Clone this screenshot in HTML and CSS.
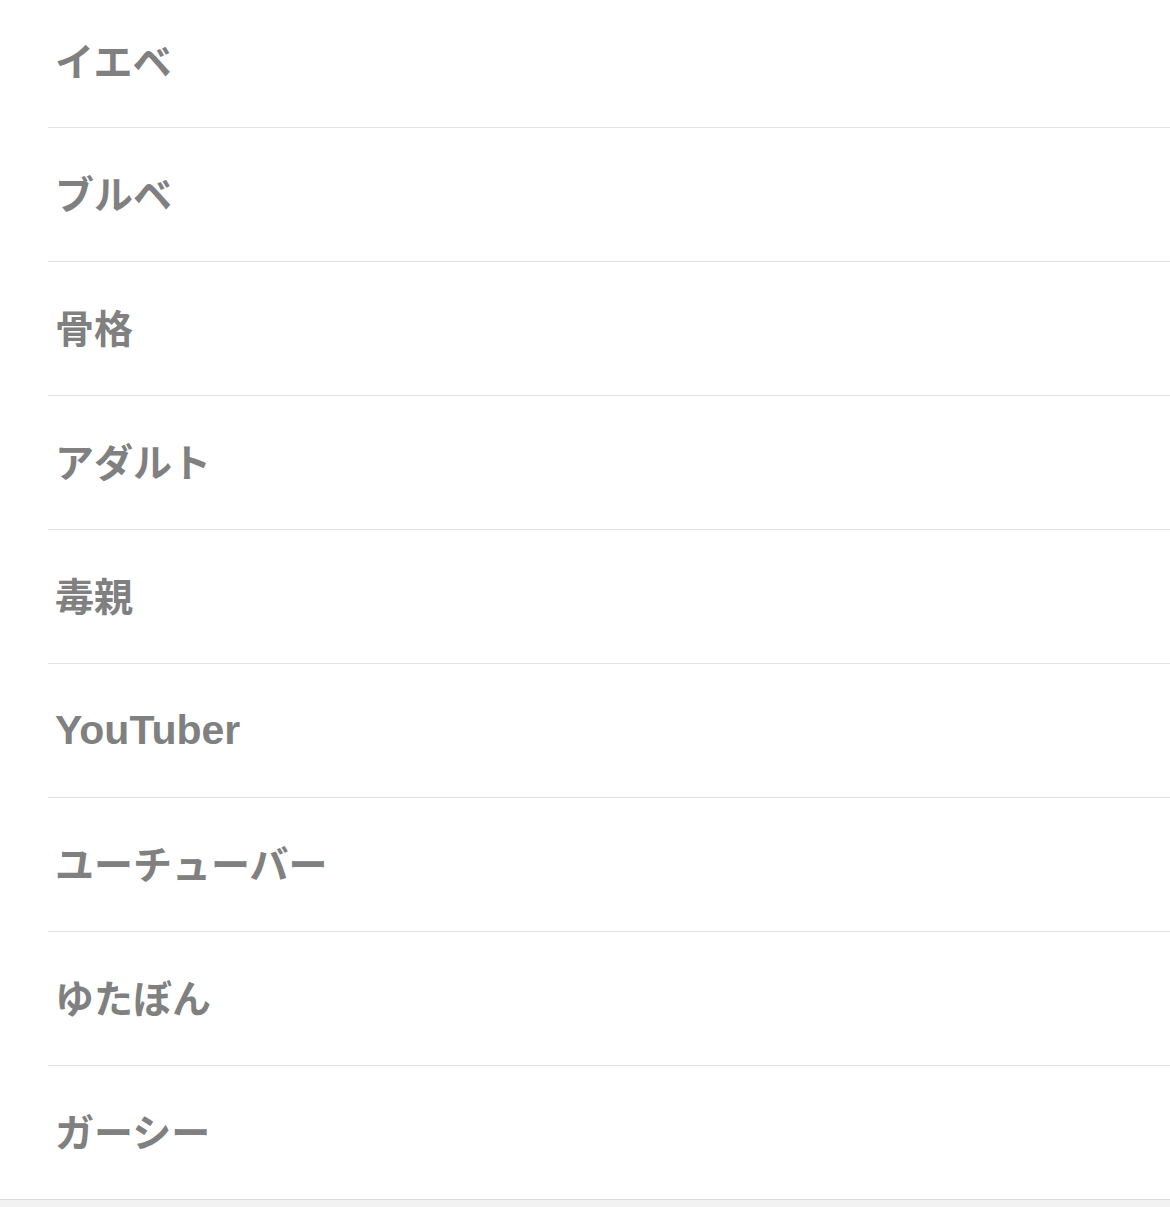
FILE: index.html
```html
<!DOCTYPE html>
<html lang="ja">
<head>
<meta charset="utf-8">
<title>キーワード</title>
<link rel="stylesheet" href="styles.css">
</head>
<body>
<div class="screen">
  <ul class="keyword-list">
    <li class="keyword-row first"><span class="keyword">イエベ</span></li>
    <li class="keyword-row"><span class="keyword">ブルベ</span></li>
    <li class="keyword-row"><span class="keyword">骨格</span></li>
    <li class="keyword-row"><span class="keyword">アダルト</span></li>
    <li class="keyword-row"><span class="keyword">毒親</span></li>
    <li class="keyword-row"><span class="keyword latin">YouTuber</span></li>
    <li class="keyword-row"><span class="keyword">ユーチューバー</span></li>
    <li class="keyword-row"><span class="keyword">ゆたぼん</span></li>
    <li class="keyword-row last"><span class="keyword">ガーシー</span></li>
  </ul>
  <div class="footer-band"></div>
</div>
</body>
</html>
```

FILE: styles.css
```css
html, body {
  margin: 0;
  padding: 0;
  background: #ffffff;
}

.screen {
  width: 1170px;
  height: 1207px;
  overflow: hidden;
  display: flex;
  flex-direction: column;
  background: #ffffff;
}

.keyword-list {
  list-style: none;
  margin: 0;
  padding: 0 0 0 48px;
}

.keyword-row {
  height: 134px;
  box-sizing: border-box;
  display: flex;
  align-items: center;
  padding-left: 7px;
  padding-bottom: 4px;
  border-bottom: 1px solid #e2e2e4;
}

/* the list is scrolled a few pixels, so the first row is cut at the top */
.keyword-row.first {
  height: 128px;
  align-items: flex-end;
  padding-bottom: 48px;
}

.keyword-row.last {
  border-bottom: none;
  height: 133px;
}

.keyword {
  font-family: "Noto Sans CJK JP", "Noto Sans", sans-serif;
  font-weight: 700;
  font-size: 39px;
  line-height: 1;
  color: #808080;
}

/* Latin-only labels sit slightly lower on the baseline */
.keyword.latin {
  font-family: "Liberation Sans", "Noto Sans CJK JP", sans-serif;
  font-size: 41px;
  margin-top: 4px;
}

.footer-band {
  flex: 1;
  border-top: 1px solid #dcdcdc;
  background: #f2f2f2;
}
```
